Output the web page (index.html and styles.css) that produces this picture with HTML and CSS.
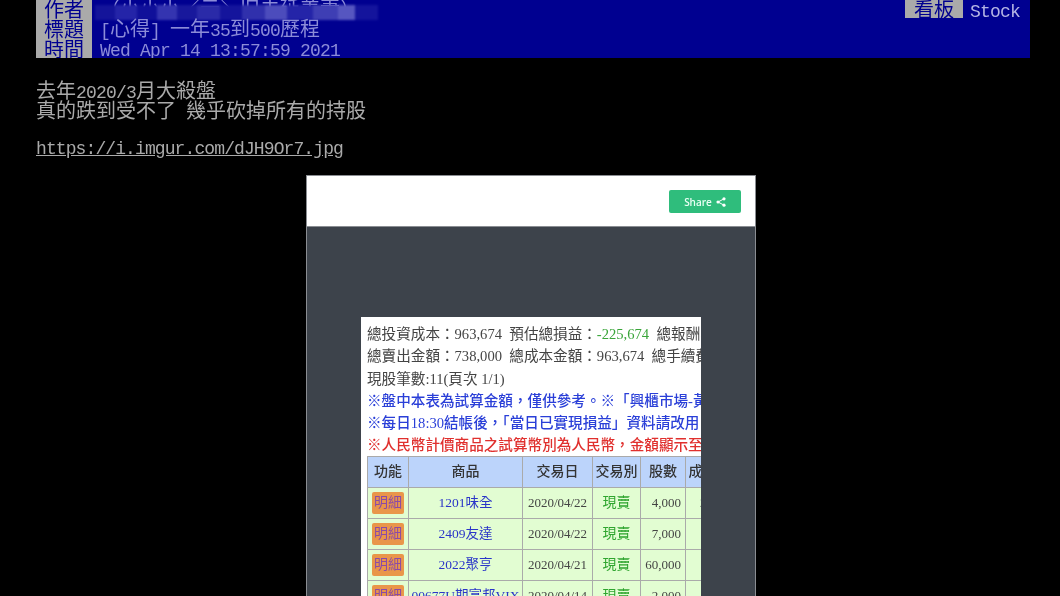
FILE: index.html
```html
<!DOCTYPE html>
<html lang="zh-Hant">
<head>
<meta charset="UTF-8" />
<meta name="viewport" content="width=device-width, initial-scale=1.0" />
<title>[心得] 一年35到500歷程</title>
<link rel="stylesheet" href="styles.css">
</head>
<body>

<div class="page">

  <!-- ===== article header ===== -->
  <div class="head">
    <div class="head-row">
      <span class="tag">作者</span>
      <span class="val val-author">（小小小／云＼旧未延姜妻）</span>
      <span class="tag tag-board">看板</span>
      <span class="board"><span class="en">Stock</span></span>
      <div class="mosaic"></div>
    </div>
    <div class="head-row">
      <span class="tag">標題</span>
      <span class="val"><span class="en">[</span>心得<span class="en">] </span>一年<span class="en">35</span>到<span class="en">500</span>歷程</span>
    </div>
    <div class="head-row">
      <span class="tag">時間</span>
      <span class="val"><span class="en">Wed Apr 14 13:57:59 2021</span></span>
    </div>
  </div>

  <!-- ===== article text ===== -->
  <div class="body-text">
    <p>去年<span class="en">2020/3</span>月大殺盤</p>
    <p>真的跌到受不了<span class="en"> </span>幾乎砍掉所有的持股</p>
    <p class="blank"></p>
    <p class="url"><a class="link en" href="#">https://i.imgur.com/dJH9Or7.jpg</a></p>
  </div>

  <!-- ===== imgur card ===== -->
  <div class="card">
    <div class="card-top">
      <a class="share" href="#">Share
        <svg class="share-icon" viewBox="0 0 12 12" width="10" height="10">
          <circle cx="9.6" cy="2.2" r="1.9"/>
          <circle cx="9.6" cy="9.8" r="1.9"/>
          <circle cx="2.4" cy="6" r="1.9"/>
          <path d="M9.6 2.2 2.4 6l7.2 3.8" fill="none" stroke="#fff" stroke-width="1.2"/>
        </svg>
      </a>
    </div>
    <div class="card-dark">
      <div class="shot">
        <div class="line">總投資成本：963,674&nbsp; 預估總損益：<span class="green">-225,674</span>&nbsp; 總報酬率：</div>
        <div class="line">總賣出金額：738,000&nbsp; 總成本金額：963,674&nbsp; 總手續費：</div>
        <div class="line">現股筆數:11(頁次 1/1)</div>
        <div class="line blue">※盤中本表為試算金額，僅供參考。※「興櫃市場-黃金</div>
        <div class="line blue">※每日18:30結帳後，「當日已實現損益」資料請改用</div>
        <div class="line red">※人民幣計價商品之試算幣別為人民幣，金額顯示至</div>
        <table class="trades">
          <thead>
            <tr><th class="c1">功能</th><th class="c2">商品</th><th class="c3">交易日</th><th class="c4">交易別</th><th class="c5">股數</th><th class="c6">成交價</th></tr>
          </thead>
          <tbody>
            <tr><td><span class="btn">明細</span></td><td class="stock">1201味全</td><td>2020/04/22</td><td class="kind">現賣</td><td class="num">4,000</td><td class="next">24.50</td></tr>
            <tr><td><span class="btn">明細</span></td><td class="stock">2409友達</td><td>2020/04/22</td><td class="kind">現賣</td><td class="num">7,000</td><td class="next"></td></tr>
            <tr><td><span class="btn">明細</span></td><td class="stock">2022聚亨</td><td>2020/04/21</td><td class="kind">現賣</td><td class="num">60,000</td><td class="next"></td></tr>
            <tr><td><span class="btn">明細</span></td><td class="stock">00677U期富邦VIX</td><td>2020/04/14</td><td class="kind">現賣</td><td class="num">2,000</td><td class="next"></td></tr>
          </tbody>
        </table>
      </div>
    </div>
  </div>

</div>

</body>
</html>
```

FILE: styles.css
```css
:root{
  --term-grey:#aaa;
  --term-blue:#000090;
}
html,body{margin:0;height:100%;background:#000;overflow:hidden;}
body{
  font-family:"Noto Sans CJK TC","Liberation Mono",monospace;
  font-size:20px;color:var(--term-grey);
}
.page{padding:0 30px 0 36px;filter:blur(.6px);}
.en{font-family:"Liberation Mono",monospace;font-size:18px;letter-spacing:-.8px;white-space:pre;}

/* header */
.head{background:var(--term-blue);height:59px;margin-top:-1px;overflow:hidden;}
.head-row{display:flex;height:20px;line-height:20px;position:relative;}
.tag{
  flex:none;width:56px;text-align:center;
  background:var(--term-grey);color:var(--term-blue);
}
.val{flex:1;padding-left:8px;line-height:17px;color:#8c8cd8;white-space:nowrap;}
.tag-board{width:58px;height:19px;}
.board{flex:none;width:67px;padding-left:7px;box-sizing:border-box;color:#b4b4e4;}
.mosaic{
  position:absolute;left:59px;top:6px;width:283px;height:15px;filter:blur(1px);
  background:linear-gradient(90deg,#14149a 0 7%,#2424a8 7% 15%,#10109a 15% 22%,#3434b0 22% 29%,#18189c 29% 36%,#2a2aa8 36% 44%,#14149c 44% 52%,#3030ac 52% 60%,#4c4cbc 60% 68%,#2424a8 68% 77%,#3e3eb4 77% 86%,#5656c0 86% 92%,#14149c 92% 100%);
}

/* article text */
.body-text{padding-top:22px;}
.body-text p{margin:0;height:20px;line-height:20px;white-space:nowrap;}
.body-text .url{line-height:12px;}
.link{color:var(--term-grey);text-decoration:underline;letter-spacing:-.9px;}

/* card */
.card{
  width:448px;margin:15px 0 0 270px;
  border:1px solid #8a8d92;background:#fff;
}
.card-top{height:50px;display:flex;justify-content:flex-end;align-items:flex-start;border-bottom:1px solid #8a8d92;}
.share{
  display:flex;align-items:center;justify-content:center;gap:4px;
  width:72px;height:23px;margin:14px 14px 0 0;border-radius:2px;
  background:#2fbd7c;color:#eafff4;text-decoration:none;
  font:600 10px "Open Sans",sans-serif;
}
.share-icon{fill:#fff;}
.card-dark{background:#3d434b;height:400px;padding:90px 54px 0 54px;}
.shot{
  background:#fff;width:340px;height:400px;overflow:hidden;
  padding:6px 0 0 6px;box-sizing:border-box;
  font:14.6px/22.3px "Liberation Serif","Noto Sans CJK TC",serif;color:#444;
}
.line{white-space:nowrap;}
.green{color:#3aa53a;}
.blue{color:#2a3fd8;font-weight:500;}
.red{color:#e0302e;font-weight:500;}

/* trades table */
.trades{
  border-collapse:collapse;table-layout:fixed;width:360px;margin-top:-1px;
  font-size:13px;line-height:18px;white-space:nowrap;
}
.trades th,.trades td{border:1px solid #aaa;height:30px;padding:0;text-align:center;}
.trades th{background:#bcd4fb;font-size:14px;font-weight:500;color:#333;}
.trades td{background:#e2fdd2;color:#444;}
.c1{width:40px;}
.c2{width:113px;}
.c3{width:69px;}
.c4{width:47px;}
.c5{width:44px;}
.c6{width:47px;}
.btn{
  display:block;width:32px;height:22px;line-height:22px;margin:0 auto;font-size:14px;
  background:#e9964a;color:#8a4aa8;border-radius:2px;
}
.trades .stock{color:#2a35c8;font-size:13.5px;}
.trades .kind{color:#2fa52f;font-size:14px;}
.trades .num{text-align:right;padding-right:4px;}
.trades .next{text-align:left;padding-left:14px;}
```
